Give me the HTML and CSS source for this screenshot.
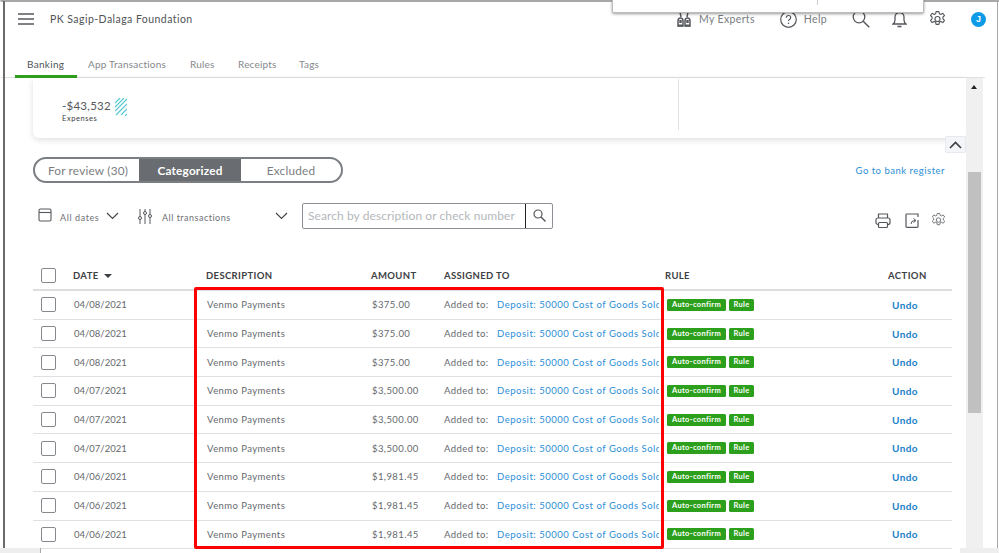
FILE: index.html
```html
<!DOCTYPE html>
<html lang="en">
<head>
<meta charset="utf-8">
<title>Banking</title>
<link rel="stylesheet" href="styles.css">
</head>
<body>
<div class="window">
  <header class="topbar">
    <div class="top-left">
      <svg class="burger" width="16" height="12" viewBox="0 0 16 12"><path d="M0 1h16M0 6h16M0 11h16" stroke="#55585c" stroke-width="1.6"/></svg>
      <span class="company">PK Sagip-Dalaga Foundation</span>
    </div>
    <div class="top-right">
      <span class="top-item experts">
        <svg width="14" height="15" viewBox="0 0 14 15" fill="none" stroke="#55585c" stroke-width="1.5"><path d="M3 0l1 5M11 0l-1 5"/><path d="M1 14V9q0-3 2.500-3T6 9v5zM8 14V9q0-3 2.500-3T13 9v5z" fill="#fff"/><path d="M3.500 8v3M10.500 8v3" stroke-width="2.400"/><path d="M1 13.500h5M8 13.500h5" stroke-width="2"/></svg>
        <span>My Experts</span>
      </span>
      <span class="top-item help">
        <svg width="17" height="17" viewBox="0 0 17 17" fill="none" stroke="#55585c" stroke-width="1.2"><circle cx="8.500" cy="8.500" r="7.800"/><path d="M6.300 6.700q0-2.200 2.200-2.200t2.200 2q0 1.200-1.200 1.900T8.500 10"/><path d="M8.500 11.600v1.300" stroke-width="1.400"/></svg>
        <span>Help</span>
      </span>
      <svg class="ic-search" width="18" height="18" viewBox="0 0 18 18" fill="none" stroke="#55585c" stroke-width="1.3"><circle cx="7" cy="7" r="5.800"/><path d="M11.200 11.200l6 6" stroke-width="1.500"/></svg>
      <svg class="ic-bell" width="15" height="18" viewBox="0 0 15 18" fill="none" stroke="#55585c" stroke-width="1.3"><path d="M1 14q2-1.500 2-4V7a4.500 4.500 0 0 1 9 0v3q0 2.500 2 4z"/><path d="M5.500 16.500h4" stroke-width="1.600"/></svg>
      <svg class="ic-gear" width="17" height="18" viewBox="0 0 24 24" fill="none" stroke="#55585c" stroke-width="1.600"><circle cx="12" cy="12" r="3.600"/><path d="M10 1.500h4l.7 3.100 2 .9 2.800-1.600 2.400 3.200-2.200 2.100v2.600l2.200 2.100-2.400 3.200-2.800-1.600-2 .9-.7 3.100h-4l-.7-3.100-2-.9-2.800 1.600-2.400-3.200 2.200-2.100V9.200L2.100 7.100l2.400-3.200 2.800 1.600 2-.9z" stroke-linejoin="round"/></svg>
      <span class="avatar">J</span>
    </div>
  </header>

  <nav class="tabs">
    <span class="tab active">Banking</span>
    <span class="tab">App Transactions</span>
    <span class="tab">Rules</span>
    <span class="tab">Receipts</span>
    <span class="tab">Tags</span>
  </nav>

  <div class="scroller">
    <main class="content">
      <section class="summary">
        <div class="summary-left">
          <div class="amount-line">
            <span class="big-amount">-$43,532</span>
            <svg class="hatch" width="12" height="18" viewBox="0 0 12 18" fill="none" stroke="#55c7cf" stroke-width="1.200"><path d="M0 5l5-5M0 9l9-9M0 13l12-12M1 17L12 6M6 17l6-6M10 18l2-2"/></svg>
          </div>
          <div class="small-label">Expenses</div>
        </div>
        <div class="summary-right"></div>
      </section>

      <button class="collapse" type="button">
        <svg width="13" height="8" viewBox="0 0 13 8" fill="none" stroke="#3a3d40" stroke-width="1.600"><path d="M1 7l5.500-5.500L12 7"/></svg>
      </button>

      <div class="seg-row">
        <div class="segmented">
          <span class="seg seg-first">For review (30)</span>
          <span class="seg seg-on">Categorized</span>
          <span class="seg seg-last">Excluded</span>
        </div>
        <a class="register">Go to bank register</a>
      </div>

      <div class="filter-row">
        <svg class="ic-cal" width="14" height="14" viewBox="0 0 14 14" fill="none" stroke="#55585c" stroke-width="1.100"><rect x="1" y="1" width="12" height="12" rx="1.500"/><path d="M1 4.500h12"/></svg>
        <span class="filter dates">All dates</span>
        <svg class="chev chev-a" width="13" height="8" viewBox="0 0 13 8" fill="none" stroke="#44474a" stroke-width="1.200"><path d="M1 1l5.500 5.500L12 1"/></svg>
        <svg class="ic-sliders" width="14" height="15" viewBox="0 0 14 15" fill="none" stroke="#55585c" stroke-width="1"><path d="M2 0v15M7 0v15M12 0v15"/><circle cx="2" cy="9" r="1.500" fill="#fff"/><circle cx="7" cy="4" r="1.500" fill="#fff"/><circle cx="12" cy="7" r="1.500" fill="#fff"/></svg>
        <span class="filter trans">All transactions</span>
        <svg class="chev chev-b" width="13" height="8" viewBox="0 0 13 8" fill="none" stroke="#44474a" stroke-width="1.200"><path d="M1 1l5.500 5.500L12 1"/></svg>
        <div class="search">
          <span class="placeholder">Search by description or check number</span>
          <span class="search-btn">
            <svg width="13" height="13" viewBox="0 0 13 13" fill="none" stroke="#55585c" stroke-width="1.200"><circle cx="5" cy="5" r="4"/><path d="M8 8l4.500 4.500" stroke-width="1.400"/></svg>
          </span>
        </div>
        <div class="tools">
          <svg width="16" height="16" viewBox="0 0 16 16" fill="none" stroke="#55585c" stroke-width="1.200"><path d="M3.500 5V1h9v4"/><rect x="1" y="5" width="14" height="6.500" rx="2"/><rect x="3.500" y="9.500" width="9" height="5" rx="1" fill="#fff"/></svg>
          <svg width="14" height="15" viewBox="0 0 14 15" fill="none" stroke="#55585c" stroke-width="1.200"><path d="M13 7v6.500a.8.800 0 0 1-.8.800H1.800a.8.800 0 0 1-.8-.8V1.800A.8.800 0 0 1 1.800 1H13v3"/><path d="M6 11q0-3.500 4-3.500M8.500 5.500l2.500 2-2.500 2" stroke-width="1"/></svg>
          <svg class="tool-gear" width="15" height="16" viewBox="0 0 24 24" fill="none" stroke="#6b6e72" stroke-width="1.500"><circle cx="12" cy="12" r="3.600"/><path d="M10 1.500h4l.7 3.100 2 .9 2.800-1.600 2.400 3.200-2.200 2.100v2.600l2.200 2.100-2.400 3.200-2.800-1.600-2 .9-.7 3.100h-4l-.7-3.100-2-.9-2.800 1.600-2.400-3.200 2.200-2.100V9.200L2.100 7.100l2.400-3.200 2.800 1.600 2-.9z" stroke-linejoin="round"/></svg>
        </div>
      </div>

      <div class="table">
        <div class="row head">
          <span class="c-check"><i class="box"></i></span>
          <span class="c-date">DATE <i class="sort"></i></span>
          <span class="c-desc">DESCRIPTION</span>
          <span class="c-amt">AMOUNT</span>
          <span class="c-assign">ASSIGNED TO</span>
          <span class="c-rule">RULE</span>
          <span class="c-action">ACTION</span>
        </div>
        <div class="row"><span class="c-check"><i class="box"></i></span><span class="c-date">04/08/2021</span><span class="c-desc">Venmo Payments</span><span class="c-amt">$375.00</span><span class="c-assign"><span class="added">Added to:</span><a class="link">Deposit: 50000 Cost of Goods Sold</a></span><span class="c-rule"><b class="tag tag-a">Auto-confirm</b><b class="tag tag-b">Rule</b></span><a class="c-action undo">Undo</a></div>
        <div class="row"><span class="c-check"><i class="box"></i></span><span class="c-date">04/08/2021</span><span class="c-desc">Venmo Payments</span><span class="c-amt">$375.00</span><span class="c-assign"><span class="added">Added to:</span><a class="link">Deposit: 50000 Cost of Goods Sold</a></span><span class="c-rule"><b class="tag tag-a">Auto-confirm</b><b class="tag tag-b">Rule</b></span><a class="c-action undo">Undo</a></div>
        <div class="row"><span class="c-check"><i class="box"></i></span><span class="c-date">04/08/2021</span><span class="c-desc">Venmo Payments</span><span class="c-amt">$375.00</span><span class="c-assign"><span class="added">Added to:</span><a class="link">Deposit: 50000 Cost of Goods Sold</a></span><span class="c-rule"><b class="tag tag-a">Auto-confirm</b><b class="tag tag-b">Rule</b></span><a class="c-action undo">Undo</a></div>
        <div class="row"><span class="c-check"><i class="box"></i></span><span class="c-date">04/07/2021</span><span class="c-desc">Venmo Payments</span><span class="c-amt">$3,500.00</span><span class="c-assign"><span class="added">Added to:</span><a class="link">Deposit: 50000 Cost of Goods Sold</a></span><span class="c-rule"><b class="tag tag-a">Auto-confirm</b><b class="tag tag-b">Rule</b></span><a class="c-action undo">Undo</a></div>
        <div class="row"><span class="c-check"><i class="box"></i></span><span class="c-date">04/07/2021</span><span class="c-desc">Venmo Payments</span><span class="c-amt">$3,500.00</span><span class="c-assign"><span class="added">Added to:</span><a class="link">Deposit: 50000 Cost of Goods Sold</a></span><span class="c-rule"><b class="tag tag-a">Auto-confirm</b><b class="tag tag-b">Rule</b></span><a class="c-action undo">Undo</a></div>
        <div class="row"><span class="c-check"><i class="box"></i></span><span class="c-date">04/07/2021</span><span class="c-desc">Venmo Payments</span><span class="c-amt">$3,500.00</span><span class="c-assign"><span class="added">Added to:</span><a class="link">Deposit: 50000 Cost of Goods Sold</a></span><span class="c-rule"><b class="tag tag-a">Auto-confirm</b><b class="tag tag-b">Rule</b></span><a class="c-action undo">Undo</a></div>
        <div class="row"><span class="c-check"><i class="box"></i></span><span class="c-date">04/06/2021</span><span class="c-desc">Venmo Payments</span><span class="c-amt">$1,981.45</span><span class="c-assign"><span class="added">Added to:</span><a class="link">Deposit: 50000 Cost of Goods Sold</a></span><span class="c-rule"><b class="tag tag-a">Auto-confirm</b><b class="tag tag-b">Rule</b></span><a class="c-action undo">Undo</a></div>
        <div class="row"><span class="c-check"><i class="box"></i></span><span class="c-date">04/06/2021</span><span class="c-desc">Venmo Payments</span><span class="c-amt">$1,981.45</span><span class="c-assign"><span class="added">Added to:</span><a class="link">Deposit: 50000 Cost of Goods Sold</a></span><span class="c-rule"><b class="tag tag-a">Auto-confirm</b><b class="tag tag-b">Rule</b></span><a class="c-action undo">Undo</a></div>
        <div class="row"><span class="c-check"><i class="box"></i></span><span class="c-date">04/06/2021</span><span class="c-desc">Venmo Payments</span><span class="c-amt">$1,981.45</span><span class="c-assign"><span class="added">Added to:</span><a class="link">Deposit: 50000 Cost of Goods Sold</a></span><span class="c-rule"><b class="tag tag-a">Auto-confirm</b><b class="tag tag-b">Rule</b></span><a class="c-action undo">Undo</a></div>
      </div>
    </main>
    <aside class="scrollbar">
      <i class="arrow"></i>
      <i class="thumb"></i>
    </aside>
  </div>
</div>
<div class="popup"><i class="popup-line"></i></div>
<div class="highlight"></div>
<div class="edge-right"></div>
<div class="corner-bl"></div>
<div class="corner-br"></div>
</body>
</html>
```
FILE: styles.css
```css
* { box-sizing: border-box; }
html, body { margin: 0; height: 100%; overflow: hidden; background: #fff; }
body { font-family: "Lato", "Liberation Sans", sans-serif; color: #55585c; width: 999px; height: 553px; position: relative; }
a { color: inherit; }

.window { height: 553px; width: 999px; margin: 0; border-top: 2px solid #a8a8a8; border-left: 1px solid #fff; padding-left: 0; display: flex; flex-direction: column; position: relative; }
.window::before { content: ""; position: absolute; left: 2px; top: -1px; bottom: 5px; width: 2px; background: #6b6b6b; }

.topbar { height: 34px; padding: 7px 0 0 17px; display: flex; justify-content: space-between; }
.top-left { display: flex; align-items: center; height: 20px; }
.burger { margin-right: 16px; }
.company { font-size: 10.500px; letter-spacing: .45px; color: #505357; }
.top-right { display: flex; align-items: center; height: 20px; padding-right: 13px; }
.top-item { display: flex; align-items: center; font-size: 10.500px; letter-spacing: .35px; color: #797c80; }
.experts svg { margin-right: 8px; }
.experts { margin-right: 25px; }
.help svg { margin-right: 7px; }
.help { margin-right: 25px; }
.ic-search { margin-right: 22px; }
.ic-bell { margin-right: 22px; }
.ic-gear { margin-right: 25px; }
.avatar { width: 15px; height: 15px; border-radius: 50%; background: #0d9be8; color: #fff; font: 700 9px/15px "Liberation Sans", sans-serif; text-align: center; }

.tabs { height: 42px; margin-right: 14px; padding-left: 14px; display: flex; border-bottom: 1px solid #dfe1e3; margin-left: 0; }
.tab { font-size: 10px; letter-spacing: .2px; color: #85888c; padding-top: 22px; white-space: nowrap; }
.tab.active { color: #505357; padding: 22px 11px 0 12px; border-bottom: 3px solid #2ca01c; margin-bottom: -1px; height: 42px; width: 62px; letter-spacing: .3px; }
.tab:nth-child(2) { margin-left: 11px; width: 102px; }
.tab:nth-child(3) { width: 48px; }
.tab:nth-child(4) { width: 61px; }

.scroller { flex: 1; display: flex; min-height: 0; }
.content { width: 965px; padding: 0 0 0 32px; position: relative; }

.summary { width: 934px; height: 60px; background: #fff; border-radius: 0 0 6px 6px; box-shadow: 0 2px 6px rgba(0,0,0,.13); display: flex; padding: 1px 0 0 29px; }
.summary-left { width: 617px; height: 51px; border-right: 1px solid #e0e0e0; padding-top: 15px; }
.amount-line { display: flex; align-items: center; height: 22px; }
.big-amount { font-size: 11.500px; letter-spacing: .25px; color: #55585c; }
.hatch { margin: 4px 0 0 4px; }
.small-label { font-size: 7.500px; letter-spacing: .55px; color: #3a3d40; margin-top: -2px; }

.collapse { position: absolute; right: 0; top: 58px; width: 21px; height: 17px; padding: 0; background: #f4f5f8; border: 1px solid #e6e9f0; border-radius: 2px; display: flex; align-items: center; justify-content: center; }

.seg-row { display: flex; align-items: center; height: 26px; margin-top: 19px; width: 913px; justify-content: space-between; }
.segmented { display: flex; height: 26px; width: 310px; border: 2px solid #7b7e82; border-radius: 13px; overflow: hidden; font-size: 11.800px; letter-spacing: .2px; color: #7b7e82; }
.seg { display: flex; align-items: center; justify-content: center; }
.seg-first { width: 104px; padding-left: 2px; }
.seg-on { width: 102px; background: #696c70; color: #fff; font-weight: 700; }
.seg-last { flex: 1; }
.register { font-size: 9.500px; letter-spacing: .5px; color: #2b8ed6; padding-right: 1px; }

.filter-row { display: flex; align-items: center; height: 26px; margin-top: 20px; font-size: 9px; letter-spacing: .4px; color: #6e7175; }
.filter { padding-top: 2px; }
.ic-cal { margin: -2px 0 0 5px; }
.dates { margin-left: 8px; width: 46px; letter-spacing: .6px; }
.chev-a { margin-right: 19px; }
.trans { margin-left: 10px; width: 113px; letter-spacing: .5px; }
.chev-b { margin-right: 14px; }
.search { width: 251px; height: 26px; margin-top: -1px; border: 1px solid #8d9096; border-radius: 2px; display: flex; align-items: center; justify-content: space-between; flex: none; }
.placeholder { font-size: 12px; letter-spacing: .08px; color: #b4b7bb; padding-left: 5px; white-space: nowrap; }
.search-btn { width: 27px; height: 24px; border-left: 1px solid #222; display: flex; align-items: center; justify-content: center; }
.tools { display: flex; align-items: center; gap: 14px; margin-left: 322px; padding-top: 9px; }
.tool-gear { margin: -1px 0 0 -2px; }

.table { margin-top: 33px; width: 919px; }
.row { height: 28.700px; display: grid; grid-template-columns: 40px 133px 165px 73px 221px 227px 60px; align-items: center; border-bottom: 1px solid #dfe0e2; font-size: 9.500px; letter-spacing: .42px; color: #66696d; }
.row > span { white-space: nowrap; }
.head { height: 29px; border-bottom: 2px solid #dcdddf; color: #3e4144; font-weight: 700; font-size: 9.500px; letter-spacing: .36px; }
.box { display: block; width: 15px; height: 15px; margin-left: 8px; border: 1px solid #85888c; border-radius: 2px; background: #fff; }
.c-date { padding-left: 1px; letter-spacing: 0; }
.head .c-date { padding-left: 0; letter-spacing: .36px; }
.sort { display: inline-block; width: 0; height: 0; margin-left: 3px; border: 4px solid transparent; border-top: 4px solid #3e4144; border-bottom: 0; vertical-align: 1px; }
.c-desc { padding-left: 1px; }
.head .c-desc { padding-left: 0; }
.c-amt { padding-left: 1px; }
.head .c-amt, .head .c-assign { padding-left: 0; }
.c-assign { display: flex; overflow: hidden; width: 215px; }
.added { width: 53px; flex: none; }
.link { color: #2b8ed6; white-space: nowrap; letter-spacing: .52px; }
.c-rule { display: flex; gap: 3px; padding-left: 2px; }
.head .c-rule { padding-left: 0; }
.tag { display: block; background: #2ca01c; color: #fff; font-size: 7.500px; line-height: 12px; height: 12px; border-radius: 1.500px; text-align: center; letter-spacing: .35px; }
.tag-a { width: 59px; }
.tag-b { width: 25px; }
.undo { color: #1a7fc9; font-weight: 700; font-size: 10px; letter-spacing: .4px; }
.head .c-action { margin-left: -4px; letter-spacing: .42px; }

.scrollbar { width: 17px; background: #f0f0f0; position: relative; height: 100%; }
.arrow { position: absolute; left: 5px; top: 7px; width: 0; height: 0; border: 3.500px solid transparent; border-bottom: 4px solid #222; border-top: 0; }
.thumb { position: absolute; left: 2px; right: 2px; top: 94px; height: 241px; background: #c0c0c0; }

.popup { position: absolute; left: 612px; top: 0; width: 312px; height: 13px; background: #fff; border: 1px solid #bcbcbc; border-top: 0; border-radius: 0 0 2px 2px; box-shadow: 0 1px 3px rgba(0,0,0,.4); }
.popup-line { position: absolute; left: 204px; top: 0; height: 5px; width: 1px; background: #ccc; }
.highlight { position: absolute; left: 194px; top: 287px; width: 470px; height: 262px; border: 3px solid #f00; border-radius: 2px; }
.edge-right { position: absolute; left: 997px; top: 0; bottom: 5px; width: 1px; background: #a8a8a8; }
.corner-bl { position: absolute; left: 0; bottom: 0; width: 41px; height: 5px; background: #eeeeee; border-right: 1px solid #aaa; }
.corner-br { position: absolute; right: 0; bottom: 0; width: 39px; height: 5px; background: #eeeeee; }
```
